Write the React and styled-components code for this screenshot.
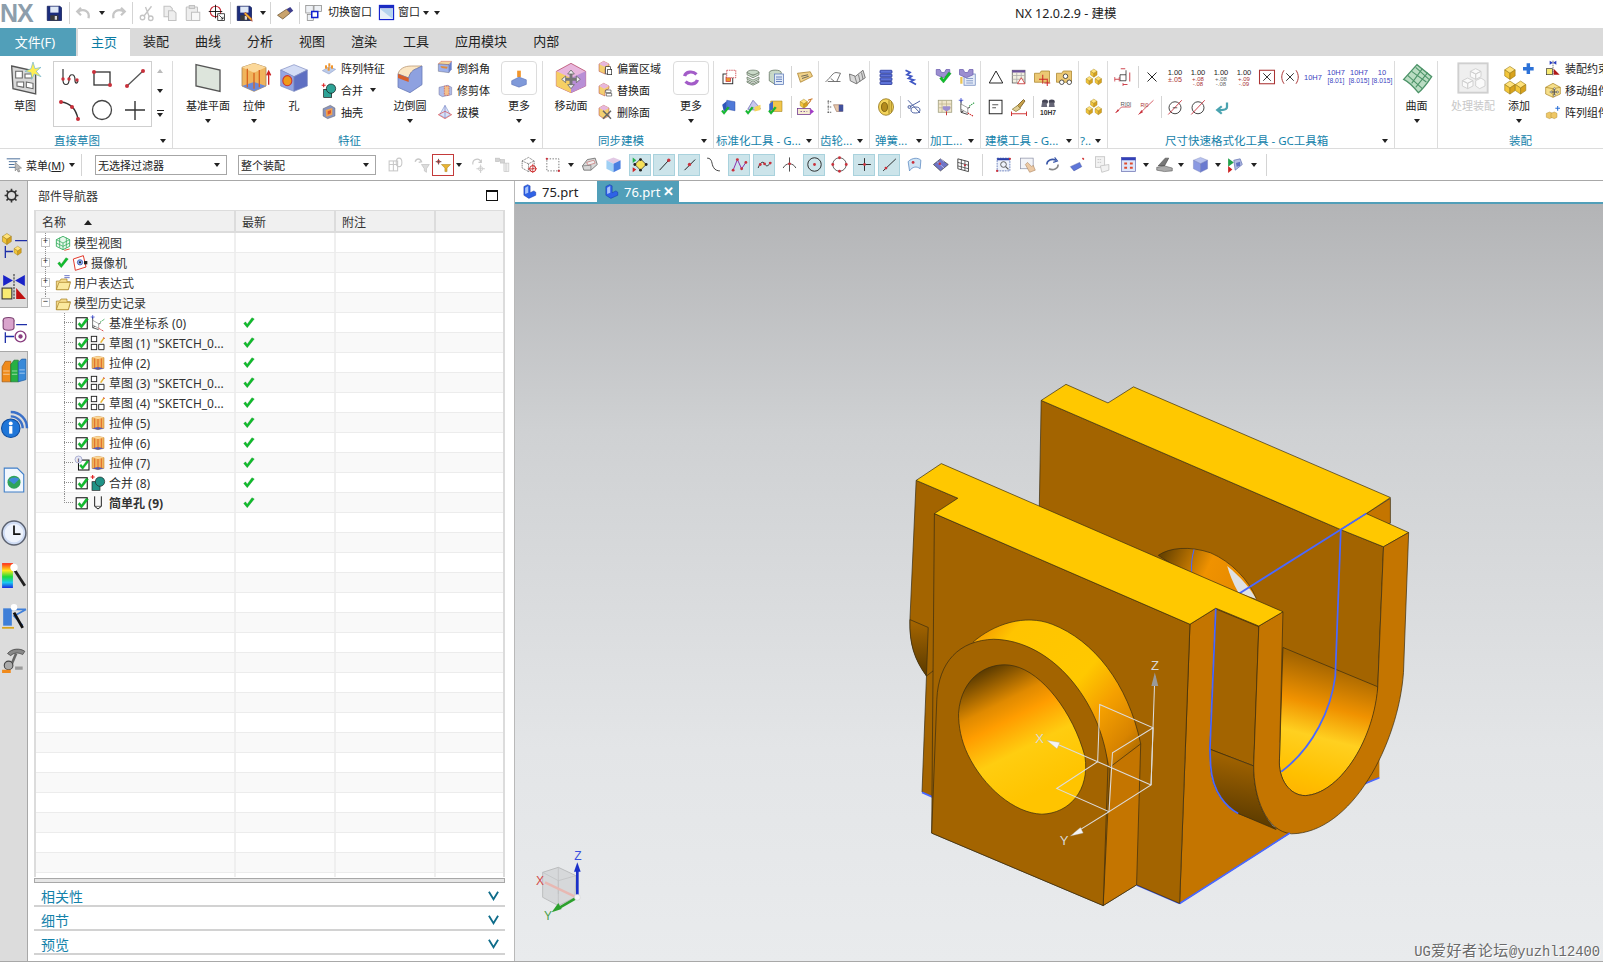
import React from 'react'
import styled, { createGlobalStyle } from 'styled-components'

const GlobalStyle = createGlobalStyle`
  html, body { margin: 0; padding: 0; background: #fff; }
  body {
    width: 1603px; height: 965px; overflow: hidden;
    font-family: "Noto Sans", "Noto Sans CJK SC", sans-serif;
    font-size: 11px; color: #333;
  }
`

const Shell = styled.div`
  width: 1603px;
  height: 965px;
  display: flex;
  flex-direction: column;
  overflow: hidden;
`

/* ---------- title bar ---------- */
const TitleBar = styled.div`
  height: 28px;
  display: flex;
  align-items: center;
  box-sizing: border-box;
  padding-bottom: 3px;
  background: #fff;
  font-size: 12px;
  white-space: nowrap;
`
const Logo = styled.div`
  width: 33px;
  font: bold 25px/28px "Liberation Sans", sans-serif;
  letter-spacing: -1px;
  color: #8d9eac;
`
const Slot = styled.div`
  flex: none;
  width: ${p => p.$w}px;
  margin-left: ${p => p.$ml}px;
  height: ${p => p.$h || 22}px;
  display: flex;
  align-items: center;
  justify-content: center;
  box-sizing: border-box;
  ${p => p.$on && 'background: #cce4ea; border: 1px solid #a9d2dd;'}
  ${p => p.$box && 'border: 1px solid #c43a3a;'}
`
const Bar = styled.div`
  flex: none;
  width: 1px;
  margin-left: ${p => p.$ml}px;
  height: ${p => p.$h || 22}px;
  background: #d4d4d4;
`
const Down = styled.div`
  flex: none;
  margin-left: ${p => p.$ml || 0}px;
  width: 0;
  height: 0;
  border-left: 3.5px solid transparent;
  border-right: 3.5px solid transparent;
  border-top: 4px solid #222;
`
const BarText = styled.span`
  flex: none;
  margin-left: ${p => p.$ml}px;
  font-size: ${p => p.$fs || 11}px;
  color: #222;
`
const QuickText = styled(BarText)`
  margin-bottom: 3px;
`
const WinTitle = styled.span`
  margin-left: 575px;
  font-size: 12.5px;
  color: #222;
`

/* ---------- tabs ---------- */
const TabBar = styled.div`
  height: 28px;
  display: flex;
  background: #dadada;
`
const FileTab = styled.div`
  width: 76px;
  margin-right: 2px;
  box-sizing: border-box;
  padding-right: 6px;
  background: #519fb9;
  color: #fff;
  font-size: 13px;
  line-height: 28px;
  text-align: center;
`
const MenuTab = styled.div`
  padding: 0 13px;
  font-size: 13px;
  line-height: 27px;
  color: ${p => (p.$on ? '#0b7ca3' : '#222')};
  box-sizing: border-box;
  ${p => p.$on && 'background: #fff; border-top: 1px solid #b9b9b9;'}
`

/* ---------- ribbon ---------- */
const Ribbon = styled.div`
  height: 93px;
  display: flex;
  padding-top: 5px;
  box-sizing: border-box;
  border-bottom: 1px solid #dcdcdc;
  overflow: hidden;
  flex: none;
`
const Group = styled.div`
  flex: none;
  width: ${p => p.$w}px;
  height: 87px;
  box-sizing: border-box;
  border-right: ${p => (p.$last ? 'none' : '1px solid #dcdcdc')};
  display: flex;
  flex-direction: column;
`
const GroupBody = styled.div`
  height: 72px;
  display: flex;
  padding-left: ${p => p.$pl || 0}px;
`
const GroupFoot = styled.div`
  height: 15px;
  display: flex;
  align-items: center;
  padding: 0 6px 0 ${p => p.$pl || 0}px;
  font-size: 11.5px;
  line-height: 15px;
  color: #1482aa;
  white-space: nowrap;
`
const FootCaret = styled(Down)`
  margin-left: auto;
`
const BigTool = styled.div`
  flex: none;
  width: ${p => p.$w}px;
  margin-left: ${p => p.$ml || 0}px;
  display: flex;
  flex-direction: column;
  align-items: center;
  font-size: 11px;
  line-height: 14px;
  white-space: nowrap;
  color: ${p => (p.$off ? '#c8c8c8' : '#222')};
`
const BigIcon = styled.div`
  width: 36px;
  height: 33px;
  margin: 0 0 5px;
  display: flex;
  align-items: center;
  justify-content: center;
`
const MoreIcon = styled.div`
  width: 36px;
  height: 34px;
  margin-bottom: 4px;
  box-sizing: border-box;
  border: 1px solid #dcdcdc;
  border-radius: 4px;
  display: flex;
  align-items: center;
  justify-content: center;
`
const ToolCaret = styled(Down)`
  margin-top: 6px;
`
const Gallery = styled.div`
  flex: none;
  width: 99px;
  height: 66px;
  margin-left: 6px;
  box-sizing: border-box;
  border: 1px solid #cfcfcf;
  display: grid;
  grid-template-columns: repeat(3, 1fr);
  align-items: center;
  justify-items: center;
`
const Scroller = styled.div`
  flex: none;
  width: 16px;
  height: 66px;
  display: flex;
  flex-direction: column;
  align-items: center;
  justify-content: space-around;
  padding: 0 0 2px;
  box-sizing: border-box;
`
const ScrollUp = styled.div`
  width: 0;
  height: 0;
  border-left: 3.5px solid transparent;
  border-right: 3.5px solid transparent;
  border-bottom: 4px solid #bbb;
`
const ScrollMore = styled.div`
  width: 7px;
  border-top: 1px solid #222;
  padding-top: 2px;
  display: flex;
  justify-content: center;
`
const SmallCol = styled.div`
  flex: none;
  width: ${p => p.$w}px;
  margin: -4px 0 0 ${p => p.$ml || 0}px;
  display: flex;
  flex-direction: column;
`
const SmallRow = styled.div`
  height: 22px;
  display: flex;
  align-items: center;
  gap: 4px;
  font-size: 11px;
  color: #222;
  white-space: nowrap;
`
const IconRows = styled.div`
  display: flex;
  flex-direction: column;
  padding-top: 4px;
  gap: 6px;
`
const IconRow = styled.div`
  height: 24px;
  display: flex;
  align-items: center;
`

/* ---------- toolbar ---------- */
const ToolBar = styled.div`
  height: 31px;
  flex: none;
  display: flex;
  align-items: center;
  background: #fff;
  white-space: nowrap;
`
const ToolStart = styled.div`
  flex: none;
  width: 376px;
  display: flex;
  align-items: center;
`
const Select = styled.div`
  flex: none;
  width: ${p => p.$w}px;
  height: 20px;
  box-sizing: border-box;
  border: 1px solid #a6a6a6;
  border-width: 1px 1.5px;
  display: flex;
  align-items: center;
  justify-content: space-between;
  padding: 0 6px 0 2px;
  font-size: 11px;
  color: #222;
`
const Selects = styled.div`
  margin-left: auto;
  display: flex;
  gap: 11px;
`

/* ---------- main ---------- */
const Main = styled.div`
  flex: 1;
  display: flex;
  border-top: 1px solid #a8a8a8;
  border-bottom: 1px solid #a8a8a8;
  margin-bottom: 3px;
  min-height: 0;
`
const Rail = styled.div`
  flex: none;
  width: 28px;
  box-sizing: border-box;
  background: #dcdcdc;
  border-right: 1px solid #a8a8a8;
  display: flex;
  flex-direction: column;
`
const RailItem = styled.div`
  flex: none;
  margin-top: ${p => p.$mt}px;
  height: ${p => p.$h || 30}px;
  display: flex;
  align-items: center;
  justify-content: center;
  box-sizing: border-box;
  ${p => p.$small && 'padding-right: 5px;'}
  ${p => p.$on && `
    width: 28px;
    background: #fff;
    border-top: 1px solid #a8a8a8;
    border-bottom: 1px solid #a8a8a8;
  `}
`
const Nav = styled.div`
  flex: none;
  width: 487px;
  box-sizing: border-box;
  border-right: 1px solid #b9b9b9;
  display: flex;
  flex-direction: column;
  padding: 0 9px 6px 6px;
`
const NavHead = styled.div`
  height: 29px;
  flex: none;
  display: flex;
  align-items: center;
  justify-content: space-between;
  padding: 0 7px 0 4px;
  font-size: 12px;
  color: #333;
`
const RestoreBox = styled.div`
  width: 12px;
  height: 11px;
  box-sizing: border-box;
  border: 1px solid #111;
  border-top-width: 2px;
`
const Table = styled.div`
  flex: 1;
  min-height: 0;
  border: solid #dcdcdc;
  border-width: 1px 2px 0 2px;
  overflow: hidden;
  display: flex;
  flex-direction: column;
`
const HeadRow = styled.div`
  height: 20px;
  flex: none;
  display: flex;
  background: #f0f0f0;
  border-bottom: 2px solid #dcdcdc;
`
const HeadCell = styled.div`
  width: ${p => p.$w};
  flex: ${p => (p.$w ? 'none' : 1)};
  box-sizing: border-box;
  border-right: 2px solid #dcdcdc;
  padding: 2px 0 0 6px;
  display: flex;
  align-items: center;
  gap: 18px;
  font-size: 12px;
  color: #333;
  &:last-child { border-right: none; }
`
const SortUp = styled.div`
  width: 0;
  height: 0;
  border-left: 4.5px solid transparent;
  border-right: 4.5px solid transparent;
  border-bottom: 5px solid #222;
`
const Row = styled.div`
  height: 20px;
  flex: none;
  display: flex;
  box-sizing: border-box;
  border-bottom: 1px solid #ececec;
  background: ${p => (p.$odd ? '#f9f9f9' : '#fff')};
  position: relative;
  &::before {
    content: ${p => (p.$guide ? "''" : 'none')};
    position: absolute;
    left: ${p => p.$guide}px;
    top: 0;
    height: ${p => (p.$end ? '10px' : '100%')};
    border-left: 1px dotted #8f8f8f;
  }
`
const NameCell = styled.div`
  width: 200px;
  flex: none;
  box-sizing: border-box;
  border-right: 2px solid #efefef;
  display: flex;
  align-items: center;
  padding-left: ${p => p.$pl}px;
  font-size: 12px;
  font-weight: ${p => (p.$bold ? 700 : 400)};
  color: #333;
  white-space: nowrap;
  overflow: hidden;
`
const Cell = styled.div`
  width: ${p => p.$w};
  flex: ${p => (p.$w ? 'none' : 1)};
  box-sizing: border-box;
  border-right: 2px solid #efefef;
  padding-left: 6px;
  display: flex;
  align-items: center;
  &:last-child { border-right: none; }
`
const Expander = styled.div`
  flex: none;
  width: 9px;
  height: 9px;
  box-sizing: border-box;
  border: 1px solid #c6c6c6;
  background: #fff;
  font: 9px/7px "Liberation Mono", monospace;
  text-align: center;
  color: #111;
  margin-right: 4px;
  position: relative;
  z-index: 1;
`
const Tick = styled.div`
  flex: none;
  width: 9px;
  border-top: 1px dotted #8f8f8f;
  margin-right: 2px;
`
const Gap = styled.span`
  flex: none;
  margin-left: ${p => p.$ml}px;
`
const Splitter = styled.div`
  height: 5px;
  flex: none;
  box-sizing: border-box;
  border: 1px solid #a8a8a8;
  background: #e6e6e6;
  margin: 1px 0 0 0;
`
const Section = styled.div`
  height: 24px;
  flex: none;
  box-sizing: border-box;
  border-bottom: 2px solid #d2d2d2;
  display: flex;
  align-items: center;
  justify-content: space-between;
  padding: 3px 6px 0 7px;
  font-size: 14px;
  color: #1482aa;
`

/* ---------- graphics window ---------- */
const Work = styled.div`
  flex: 1;
  min-width: 0;
  display: flex;
  flex-direction: column;
`
const DocTabs = styled.div`
  height: 21px;
  flex: none;
  display: flex;
  padding-left: 5px;
  border-bottom: 2px solid #519fb9;
`
const DocTab = styled.div`
  width: ${p => p.$w}px;
  box-sizing: border-box;
  display: flex;
  align-items: center;
  gap: 5px;
  padding-left: ${p => (p.$on ? 7 : 2)}px;
  font-size: 13px;
  color: ${p => (p.$on ? '#fff' : '#222')};
  background: ${p => (p.$on ? '#519fb9' : 'transparent')};
`
const CloseX = styled.span`
  font: bold 13px/14px "Liberation Sans", sans-serif;
  margin-left: -2px;
`
const Viewport = styled.div`
  flex: 1;
  position: relative;
  overflow: hidden;
  background: linear-gradient(180deg, #b3b4b6 0%, #cfd1d3 30%, #e3e5e7 72%, #e9ebed 100%);
`
const Canvas = styled.svg`
  position: absolute;
  left: 0;
  top: 0;
  width: 1088px;
  height: 758px;
`
const Watermark = styled.div`
  position: absolute;
  right: 3px;
  bottom: 0;
  font: 13.8px/16px "Liberation Mono", monospace;
  color: #6a6a6a;
  text-shadow: 1px 1px 0 #fff;
  white-space: nowrap;
`
const WatermarkCjk = styled.span`
  font-family: "Noto Sans CJK SC", sans-serif;
  font-size: 15px;
  letter-spacing: .6px;
`
const Svg = styled.svg`
  display: block;
  flex: none;
  width: ${p => p.$s}px;
  height: ${p => p.$s}px;
  overflow: visible;
`

/* ---------- icon drawings ---------- */
const red = '#c9313c'
const Dot = ({ x, y, r = 2 }) => <circle cx={x} cy={y} r={r} fill={red} />
const Chk = ({ x = 0, y = 0, k = 1 }) => (
  <path transform={`translate(${x} ${y}) scale(${k})`} d="M3 13 L9 20 L21 5 L17 3 L9 14 L6 10 Z" fill="#10bd2c" stroke="#0a8a20" strokeWidth=".6" />
)
const Cube = ({ x = 0, y = 0, k = 1, a = '#ffe27a', b = '#f3c63a', c = '#d8a21c' }) => (
  <g transform={`translate(${x} ${y}) scale(${k})`} stroke="#9a7a18" strokeWidth=".7">
    <path d="M2 6 L8 2 L14 6 L8 10 Z" fill={a} />
    <path d="M2 6 L8 10 V17 L2 13 Z" fill={b} />
    <path d="M14 6 L8 10 V17 L14 13 Z" fill={c} />
  </g>
)
const Txt = ({ x = 12, y, s = 7, f = '#222', w = 400, children }) => (
  <text x={x} y={y} fontSize={s} fill={f} fontWeight={w} textAnchor="middle" fontFamily="Liberation Sans, sans-serif">{children}</text>
)
const Tol = ({ a, b, f = '#a33' }) => (
  <>
    <Txt y={9} s={10} f="#222">1.00</Txt>
    <Txt y={b ? 17 : 19} s={b ? 8 : 9.5} f={f}>{a}</Txt>
    {b && <Txt y={24} s={8} f={f}>{b}</Txt>}
  </>
)
const Fit = ({ a, b }) => (
  <>
    <Txt y={9} s={10} f="#3a3fc0">{a}</Txt>
    <Txt y={20} s={9} f="#3a3fc0">{b}</Txt>
  </>
)
const Floppy = () => (
  <>
    <path d="M3 3 H20 L22 5 V22 H3 Z" fill="#1c2d7c" stroke="#0d1a55" />
    <rect x="7" y="3.5" width="11" height="8" fill="#dfe8f6" />
    <rect x="7" y="15" width="11" height="7" fill="#3a3a3a" />
    <rect x="13" y="16" width="3" height="5" fill="#d8d8d8" />
  </>
)

const ICONS = {
  save: <Floppy />,
  saveas: (
    <>
      <Floppy />
      <path d="M12 13 L20 21 L23 23 L22 19 L14 11 Z" fill="#f2b72c" stroke="#a33" strokeWidth=".8" />
    </>
  ),
  undo: <path d="M8 5 L3 10 L8 15 M4 10 C12 6 20 9 18 19" fill="none" stroke="#c6c6c6" strokeWidth="3" />,
  redo: <path d="M16 5 L21 10 L16 15 M20 10 C12 6 4 9 6 19" fill="none" stroke="#c6c6c6" strokeWidth="3" />,
  cut: (
    <g fill="none" stroke="#c4c4c4" strokeWidth="1.8">
      <circle cx="6" cy="18" r="3" />
      <circle cx="17" cy="19" r="3" />
      <path d="M8 16 L18 3 M15 17 L10 4" />
    </g>
  ),
  copy: (
    <g fill="#eee" stroke="#c2c2c2" strokeWidth="1.4">
      <path d="M4 3 H12 L15 6 V17 H4 Z" />
      <path d="M10 9 H17 L20 12 V22 H10 Z" />
    </g>
  ),
  paste: (
    <g fill="#eee" stroke="#c2c2c2" strokeWidth="1.4">
      <rect x="3" y="4" width="15" height="18" rx="1" />
      <rect x="7" y="2" width="7" height="4" fill="#ddd" />
      <rect x="10" y="11" width="11" height="11" fill="#f8f8f8" />
    </g>
  ),
  target: (
    <>
      <circle cx="10" cy="10" r="7" fill="none" stroke={red} strokeWidth="1.6" />
      <path d="M10 1 V19 M1 10 H19" stroke="#111" strokeWidth="1.2" />
      <rect x="13" y="13" width="9" height="9" fill="#fff" stroke="#111" />
      <path d="M15 15 L20 20 M20 17 V20 H17" stroke="#111" fill="none" />
    </>
  ),
  eraser: (
    <>
      <path d="M2 15 L14 7 L19 12 L9 20 Z" fill="#c9a36c" stroke="#6c5430" />
      <path d="M14 7 L19 4 L23 9 L19 12 Z" fill="#3d3d8c" />
    </>
  ),
  switchwin: (
    <>
      <rect x="1" y="2" width="10" height="10" fill="#eef1f5" stroke="#888" />
      <rect x="12" y="2" width="10" height="8" fill="#eef1f5" stroke="#888" />
      <rect x="3" y="14" width="8" height="8" fill="#eef1f5" stroke="#888" />
      <rect x="9" y="10" width="8" height="8" fill="#fff" stroke="#1220d0" strokeWidth="2" />
    </>
  ),
  win: (
    <>
      <rect x="2" y="2" width="20" height="20" fill="#e8f0f8" stroke="#1220d0" strokeWidth="1.6" />
      <rect x="2" y="2" width="20" height="4" fill="#1c2dc0" />
      <path d="M3 7 H21 V21 Z" fill="#b5d3ee" />
    </>
  ),
  sketch: (
    <>
      <path d="M2 3 L20 7 V24 L3 20 Z" fill="#d8d8d8" stroke="#555" />
      <path d="M5 7 H10 V12 H5 Z M12 9 H17 V12 H12 Z M6 15 L11 15 V19 L6 18 Z M13 15 L18 16 V20 L13 19 Z" fill="#fff" stroke="#666" strokeWidth=".8" />
      <path d="M18 0 L19.5 5 L24 4 L20.5 7 L24 11 L19 9 L17 13 L16.5 8 L12 7 L16.5 5 Z" fill="#ffee55" stroke="#6cb4d4" strokeWidth=".5" />
    </>
  ),
  scurve: (
    <>
      <path d="M5 3 V14 C5 20 11 20 11 14 C11 7 17 7 17 14 C17 18 19 18 20 15" fill="none" stroke="#333" strokeWidth="1.2" />
      <Dot x={5} y={13} r={1.7} /><Dot x={11} y={13} r={1.7} /><Dot x={19} y={14} r={1.7} />
    </>
  ),
  srect: (
    <g>
      <rect x="4" y="6" width="16" height="13" fill="none" stroke="#333" strokeWidth="1.3" />
      <Dot x={4} y={6} /><Dot x={20} y={19} />
    </g>
  ),
  sline: (
    <g>
      <path d="M4 20 L20 5" stroke="#555" strokeWidth="1.3" />
      <Dot x={4} y={20} /><Dot x={20} y={5} />
    </g>
  ),
  sarc: (
    <g>
      <path d="M3 4 C13 5 18 11 20 21" fill="none" stroke="#333" strokeWidth="1.4" />
      <Dot x={3} y={4} /><Dot x={14} y={9} /><Dot x={20} y={21} />
    </g>
  ),
  scircle: <circle cx="12" cy="12" r="9.5" fill="none" stroke="#444" strokeWidth="1.3" />,
  splus: <path d="M12 3 V22 M2 12 H22" stroke="#333" strokeWidth="1.4" />,
  plane: <path d="M3 2 L21 6 V22 L3 18 Z" fill="#dde5dc" stroke="#555" />,
  extrude: (
    <>
      <path d="M3 4 L12 1 L21 4 V18 L12 22 L3 18 Z" fill="#f0b45c" stroke="#a85" strokeWidth=".6" />
      <path d="M3 4 L12 8 L21 4 L12 1 Z" fill="#fbd89a" />
      <path d="M3 18 L12 22 L21 18 L12 15 Z" fill="#6b89d8" />
      <path d="M7 5 V19 M12 8 V20 M16 6 V19" stroke="#d8641e" strokeWidth="1" />
      <path d="M23 8 V17 M21.5 10 L23 7 L24.5 10" stroke="#c22" fill="none" strokeWidth="1" />
    </>
  ),
  hole: (
    <>
      <path d="M12 2 L22 6 L12 11 L2 6 Z" fill="#d3dcf5" stroke="#7a88c0" strokeWidth=".5" />
      <path d="M2 6 L12 11 V22 L2 18 Z" fill="#94a5e2" stroke="#7a88c0" strokeWidth=".5" />
      <path d="M22 6 L12 11 V22 L22 18 Z" fill="#5e6fc2" stroke="#7a88c0" strokeWidth=".5" />
      <ellipse cx="7" cy="14" rx="3.4" ry="3.8" fill="#ef9a1a" stroke="#c33" strokeWidth=".8" />
    </>
  ),
  blend: (
    <>
      <path d="M3 9 C4 5 8 3 13 3 H21 L17 5 C14 6 12 8 11 12 L3 9 Z" fill="#fbe6c4" stroke="#b97" strokeWidth=".6" />
      <path d="M3 9 L11 12 C12 8 14 6 17 5 L21 3 V17 L12 23 L3 19 Z" fill="#8ea1e0" stroke="#6a7bb8" strokeWidth=".6" />
      <path d="M3 9 L11 12 V15 L3 12 Z" fill="#d95f2a" />
    </>
  ),
  more1: (
    <>
      <rect x="10" y="4" width="4" height="7" fill="#f1952b" />
      <path d="M4 15 L12 11 L20 14 V19 L12 22 L4 19 Z" fill="#7f99d9" stroke="#5a6fb5" strokeWidth=".6" />
    </>
  ),
  more2: (
    <g fill="none" stroke="#a35cc8" strokeWidth="3.4">
      <path d="M5 10 C6 5 14 4 18 8" />
      <path d="M19 14 C18 19 10 20 6 16" />
    </g>
  ),
  movface: (
    <>
      <path d="M12 1 L23 7 V18 L12 23 L1 18 V7 Z" fill="#e8b6dd" stroke="#a35" strokeWidth=".5" />
      <path d="M1 7 L12 12 V23 L1 18 Z" fill="#f6cf63" />
      <path d="M12 12 L23 7 V18 L12 23 Z" fill="#b88fd6" />
      <path d="M12 7 V19 M6 13 H18" stroke="#777" strokeWidth="2.2" />
      <path d="M12 6 L9.5 9 H14.5 Z M12 20 L9.5 17 H14.5 Z M5 13 L8 10.5 V15.5 Z M19 13 L16 10.5 V15.5 Z" fill="#eee" stroke="#666" strokeWidth=".6" />
    </>
  ),
  surface: (
    <>
      <path d="M2 13 L12 2 L23 11 C19 17 17 20 13 23 C9 18 6 15 2 13 Z" fill="#b9dcc2" stroke="#4c9368" />
      <path d="M5 10 L16 20 M8 7 L19 15 M11 4 L21 13 M8 16 L16 5 M11 19 L20 8" stroke="#4c9368" strokeWidth=".8" />
    </>
  ),
  proc: (
    <>
      <rect x="1" y="1" width="22" height="22" fill="#efefef" stroke="#cfcfcf" strokeWidth="1.4" />
      <path d="M10 7 L14 5 L18 7 L14 9 Z M10 7 V11 L14 13 V9 Z M18 7 V11 L14 13 V9 Z M4 14 L8 12 L12 14 L8 16 Z M4 14 V18 L8 20 V16 Z M12 14 V18 L8 20 V16 Z M14 14 L18 12 L21 14 V18 L17 20 L14 18 Z" fill="#fafafa" stroke="#d0d0d0" strokeWidth=".7" />
    </>
  ),
  add: (
    <>
      <Cube x={0} y={2} k={.65} /><Cube x={0} y={13} k={.65} /><Cube x={8} y={13} k={.65} />
      <path d="M19 1 V9 M15 5 H23" stroke="#2d72d8" strokeWidth="2.6" />
    </>
  ),
  pattern: (
    <>
      <path d="M2 16 L12 10 L22 14 L12 21 Z" fill="#bccbe9" stroke="#6d7fb6" strokeWidth=".6" />
      <rect x="6" y="8" width="3" height="5" fill="#f1952b" /><rect x="11" y="5" width="3" height="5" fill="#f1952b" />
      <rect x="15" y="8" width="3" height="5" fill="#f1952b" /><rect x="10" y="11" width="3" height="5" fill="#f1952b" />
    </>
  ),
  unite: (
    <>
      <path d="M1 5 H7 M4 2 V8" stroke="#d22" strokeWidth="1.6" />
      <rect x="4" y="11" width="12" height="12" fill="#2ea396" stroke="#111" />
      <circle cx="15" cy="10" r="7" fill="#2ea396" stroke="#111" />
    </>
  ),
  shell: (
    <>
      <path d="M3 7 L14 2 L21 6 V18 L10 22 L3 18 Z" fill="#8a94bd" stroke="#555" strokeWidth=".6" />
      <path d="M7 9 L17 6 V16 L8 19 Z" fill="#f2a14e" />
      <path d="M10 11 L15 9 V14 L10 16 Z" fill="#d9542a" />
    </>
  ),
  chamfer: (
    <>
      <path d="M2 6 L6 2 H22 L18 7 Z" fill="#f4d69b" stroke="#c55" strokeWidth=".7" />
      <path d="M2 6 L18 7 V19 L2 17 Z" fill="#9db0ea" stroke="#556" strokeWidth=".6" />
      <path d="M18 7 L22 2 V14 L18 19 Z" fill="#6a7fc9" />
      <path d="M5 9 L16 10 L15 13 L7 12 Z" fill="#e08a3a" />
    </>
  ),
  trim: (
    <>
      <path d="M3 8 L16 5 L22 8 V19 L8 22 L3 19 Z" fill="#b0bce8" stroke="#6f6f9a" strokeWidth=".7" />
      <rect x="11" y="6" width="7" height="14" fill="#f3c08c" stroke="#c33" strokeDasharray="1.5 1" strokeWidth=".8" />
    </>
  ),
  draft: (
    <>
      <path d="M4 16 L12 2 L20 16 L12 21 Z" fill="#d8e2f8" stroke="#6f86c8" strokeWidth=".8" />
      <path d="M2 16 L12 11 L22 16 L12 22 Z" fill="none" stroke="#d44" strokeWidth="1" />
      <path d="M12 2 V21" stroke="#55a" strokeWidth=".7" />
    </>
  ),
  offset: (
    <>
      <path d="M3 6 L10 2 L18 6 L18 10 L12 13 V21 L3 17 Z" fill="#f3cf70" stroke="#a34" strokeWidth=".7" />
      <path d="M3 6 L10 2 L18 6 L11 10 Z" fill="#e7b6dd" />
      <rect x="13" y="10" width="7" height="11" fill="#fff" stroke="#222" />
      <rect x="16" y="14" width="6" height="8" fill="#fff" stroke="#222" />
    </>
  ),
  replace: (
    <>
      <path d="M3 6 L10 2 L18 6 L18 10 L12 13 V21 L3 17 Z" fill="#f3cf70" stroke="#a34" strokeWidth=".7" />
      <path d="M3 6 L10 2 L18 6 L11 10 Z" fill="#e7b6dd" />
      <path d="M13 12 H21 V16 H13 Z M14 17 H22 V21 H14 Z" fill="#fff" stroke="#333" strokeWidth=".9" />
    </>
  ),
  del: (
    <>
      <path d="M3 6 L10 2 L18 6 L18 18 L10 22 L3 17 Z" fill="#f3cf70" stroke="#a34" strokeWidth=".7" />
      <path d="M3 6 L10 2 L18 6 L11 10 Z" fill="#e7b6dd" />
      <path d="M9 10 L21 22 M21 10 L9 22" stroke="#666" strokeWidth="2.2" />
    </>
  ),
  csys: (
    <>
      <path d="M4 3 V19 L16 12 M4 19 L13 22" fill="none" stroke="#333" strokeWidth="1.2" />
      <path d="M4 8 L13 13 V20 L4 15 Z" fill="#fff" stroke="#666" strokeWidth=".8" />
      <path d="M1 3 H7 M4 0 V6" stroke="#2233cc" strokeWidth="1" />
      <path d="M15 11 L22 6" stroke="#2a9d43" strokeWidth="1.4" strokeDasharray="2 1" />
      <path d="M13 20 L20 24" stroke="#c22" strokeWidth="1.4" strokeDasharray="2 1" />
    </>
  ),
  stdA: (
    <>
      <rect x="4" y="8" width="13" height="13" fill="none" stroke="#222" strokeWidth="1.2" />
      <rect x="8" y="12" width="6" height="6" fill="#ec9a2c" stroke={red} />
      <rect x="9" y="3" width="12" height="10" fill="#fff" stroke={red} strokeDasharray="2 1" />
    </>
  ),
  stack: (
    <g fill="#c9d9c8" stroke="#5f6f5c" strokeWidth=".9">
      <ellipse cx="12" cy="6" rx="8" ry="3.2" /><path d="M4 6 L12 10 L20 6 V9 L12 13 L4 9 Z" />
      <path d="M4 12 L12 16 L20 12 V15 L12 19 L4 15 Z" /><path d="M4 17 L12 21 L20 17 V19 L12 23 L4 19 Z" />
    </g>
  ),
  stacklist: (
    <>
      <ellipse cx="11" cy="6" rx="8" ry="3.2" fill="#c9d9c8" stroke="#5f6f5c" />
      <path d="M3 7 V17 L11 22 L19 17 V7" fill="#c9d9c8" stroke="#5f6f5c" />
      <rect x="10" y="8" width="12" height="14" fill="#e3ecf8" stroke="#5a78b8" />
      <path d="M12 12 H20 M12 15 H20 M12 18 H20" stroke="#3c5ca8" />
    </>
  ),
  tag: (
    <>
      <path d="M2 7 L19 5 L22 11 L6 19 Z" fill="#f0d28a" stroke="#a87c24" />
      <path d="M7 11 L16 9 M8 14 L17 11" stroke="#444" />
    </>
  ),
  bluecheck: (
    <>
      <path d="M9 3 L20 5 V17 L9 15 Z" fill="#4f79d8" stroke="#2b4aa0" strokeWidth=".6" />
      <path d="M3 9 L9 4 V15 L5 18 Z" fill="#2e56b8" />
      <Chk x={0} y={10} k={.6} />
    </>
  ),
  wingcheck: (
    <>
      <path d="M5 15 L12 3 L22 14 L14 16 Z" fill="#c8c7ef" stroke="#6e6db5" />
      <path d="M14 12 L22 9 V16 L14 18 Z" fill="#f6d55c" />
      <Chk x={0} y={10} k={.6} />
    </>
  ),
  cubecheck: (
    <>
      <path d="M5 4 H20 V18 H5 Z" fill="#f2c64b" stroke="#9a7a18" strokeWidth=".7" />
      <path d="M3 8 L8 4 V15 L3 18 Z" fill="#3e68c8" />
      <Chk x={0} y={10} k={.6} />
    </>
  ),
  boxpurple: (
    <>
      <Cube x={4} y={0} k={.8} />
      <rect x="2" y="14" width="17" height="8" fill="#f6ecd0" stroke="#6a2f8c" />
      <path d="M6 18 H15" stroke="#6a2f8c" strokeDasharray="2 2" />
      <path d="M19 14 L24 18 L19 22 Z" fill="#a33ac8" />
      <path d="M16 3 L22 1 M20 3 L15 9" stroke="#c9741e" strokeWidth="1.5" />
    </>
  ),
  pen1: (
    <g fill="none" stroke="#666" strokeWidth="1.2">
      <path d="M2 18 C6 17 11 6 16 6 L22 7 L17 18 H22" />
      <path d="M5 18 H19 M9 14 L14 18" />
    </g>
  ),
  pen2: (
    <>
      <path d="M2 8 L10 11 L20 3 L23 13 L11 21 L3 17 Z" fill="#d9d9d9" stroke="#555" />
      <path d="M9 11 L12 21 M14 9 L16 18 M18 6 L20 15" stroke="#666" />
    </>
  ),
  hand: (
    <>
      <path d="M2 5 H8 M2 12 H8 M2 19 H8" stroke="#333" strokeDasharray="2 1" />
      <path d="M3 3 V21" stroke="#333" strokeDasharray="1 1" />
      <path d="M10 9 H22 V18 H14 Z" fill="#e7c6a8" stroke="#a87" />
      <rect x="17" y="9" width="6" height="9" fill="#41509c" />
    </>
  ),
  coil: (
    <g fill="#5e73d8" stroke="#1f2f90" strokeWidth="1">
      <rect x="4" y="3" width="16" height="4" rx="1" /><rect x="4" y="8" width="16" height="4" rx="1" />
      <rect x="4" y="13" width="16" height="4" rx="1" /><rect x="4" y="18" width="16" height="4" rx="1" />
    </g>
  ),
  spring: <path d="M6 3 L12 6 L8 9 L14 11 L10 14 L17 16 L13 18 L20 22" fill="none" stroke="#4057c4" strokeWidth="2.4" />,
  washer: (
    <>
      <ellipse cx="12" cy="12" rx="10" ry="11" fill="#f3d35a" stroke="#8a6b10" />
      <ellipse cx="10" cy="12" rx="4" ry="6" fill="#b38a1c" stroke="#6b5208" />
      <path d="M16 3 V21 M19 5 V19" stroke="#8a6b10" />
    </>
  ),
  shears: (
    <g fill="none" stroke="#4a5fa0" strokeWidth="1.3">
      <path d="M4 3 L20 20 M6 12 L20 4" />
      <ellipse cx="14" cy="16" rx="6" ry="4" />
      <circle cx="6" cy="12" r="2" />
    </g>
  ),
  pcheck: (
    <>
      <path d="M3 2 H8 L10 6 H14 L16 2 H21 V9 L12 13 L3 9 Z" fill="#9b8ed0" stroke="#6c5fb0" />
      <Chk x={5} y={3} k={.85} />
    </>
  ),
  pdoc: (
    <>
      <rect x="8" y="8" width="15" height="15" fill="#e4ebf8" stroke="#6c86bc" />
      <path d="M2 2 H7 L9 6 H13 L15 2 H20 V9 L11 13 L2 9 Z" fill="#9b8ed0" stroke="#6c5fb0" />
      <path d="M3 12 V21 H6 V12 Z" fill="#eac353" />
      <path d="M11 14 H20 M11 17 H20 M11 20 H20" stroke="#6c86bc" />
    </>
  ),
  gridp: (
    <>
      <rect x="3" y="3" width="18" height="16" fill="#f1e7cc" stroke="#9a9a7a" />
      <path d="M3 8 H21 M3 13 H21 M8 3 V19 M14 3 V19" stroke="#bdb38c" />
      <path d="M9 11 H19 V15 L14 18 L9 15 Z" fill="#9b8ed0" />
      <path d="M14 18 V23" stroke="#c33" strokeWidth="1.4" />
    </>
  ),
  tri: <path d="M12 4 L21 20 H3 Z" fill="none" stroke="#222" strokeWidth="1.3" />,
  tbl: (
    <>
      <rect x="3" y="3" width="17" height="17" fill="#f2efe0" stroke="#555" />
      <rect x="3" y="3" width="17" height="3" fill="#6a4f9c" />
      <path d="M3 10 H20 M3 15 H20 M9 6 V20 M15 6 V20" stroke="#aaa" />
      <path d="M15 13 L20 21 H10 Z" fill="#fff" stroke="#c22" />
    </>
  ),
  foldplus: (
    <>
      <path d="M2 7 H9 L11 4 H22 V19 H2 Z" fill="#ecc873" stroke="#a9842c" />
      <path d="M13 9 V21 M8 15 H20 M19 16 V24 M15 20 H23" stroke="#c22" strokeWidth="1.3" />
    </>
  ),
  foldnet: (
    <>
      <path d="M2 7 H9 L11 4 H22 V19 H2 Z" fill="#ecc873" stroke="#a9842c" />
      <circle cx="14" cy="11" r="3" fill="#fff" stroke="#222" />
      <circle cx="9" cy="19" r="3" fill="#fff" stroke="#222" />
      <circle cx="19" cy="19" r="3" fill="#fff" stroke="#222" />
    </>
  ),
  note: (
    <>
      <rect x="3" y="3" width="17" height="18" fill="#fff" stroke="#222" strokeWidth="1.3" />
      <path d="M7 9 H15 M7 13 H12" stroke="#222" />
    </>
  ),
  brush: (
    <>
      <path d="M8 12 L18 2 L20 4 L12 15 Z" fill="#c8a24c" stroke="#6a4c10" />
      <path d="M3 15 L10 10 L14 14 L8 18 Z" fill="#e2cf96" stroke="#8a7a38" />
      <path d="M2 21 H22 M2 18 V24 M22 18 V24" stroke="#c22" strokeWidth="1.2" />
    </>
  ),
  bino: (
    <>
      <ellipse cx="8" cy="5" rx="4" ry="3" fill="#445" /><ellipse cx="17" cy="5" rx="4" ry="3" fill="#445" />
      <path d="M4 6 L3 12 H11 L10 6 Z M14 6 L13 12 H21 L20 6 Z" fill="#667" />
      <Txt y={22} s={9} f="#333" w={700}>10H7</Txt>
    </>
  ),
  cubes: (
    <>
      <Cube x={6} y={0} k={.72} /><Cube x={0} y={10} k={.72} /><Cube x={12} y={10} k={.72} />
    </>
  ),
  dimbox: (
    <>
      <path d="M8 9 H16 V3 M8 9 V17 H16 V9" fill="none" stroke="#222" />
      <path d="M9 1 H15 M1 15 H7 M12 22 H18 M21 6 V18" stroke={red} strokeWidth="1.2" />
      <path d="M12 20 V24 M1 12 V18 M7 12 V18" stroke={red} />
    </>
  ),
  xo: <path d="M6 6 L18 18 M18 6 L6 18" stroke="#222" strokeWidth="1.3" />,
  tolA: <Tol a="±.05" />,
  tolB: <Tol a="+.08" b="-.08" />,
  tolC: <Tol a="+.08" b="-.08" f="#666" />,
  tolD: <Tol a="+.09" b="-.09" />,
  xbox: (
    <>
      <rect x="2" y="3" width="20" height="18" fill="none" stroke="#a33" strokeWidth="1.4" />
      <path d="M7 7 L17 17 M17 7 L7 17" stroke="#222" strokeWidth="1.2" />
    </>
  ),
  xparen: (
    <>
      <path d="M4 3 C0 9 0 15 4 21 M20 3 C24 9 24 15 20 21" fill="none" stroke="#a33" strokeWidth="1.3" />
      <path d="M7 7 L17 17 M17 7 L7 17" stroke="#222" strokeWidth="1.2" />
    </>
  ),
  h7: <Txt y={16} s={10} f="#3a3fc0">10H7</Txt>,
  h7a: <Fit a="10H7" b="[8.01]" />,
  h7b: <Fit a="10H7" b="[8.015]" />,
  h7c: <Fit a="10" b="[8.015]" />,
  dimR: (
    <>
      <path d="M2 20 L10 12 H22" fill="none" stroke={red} />
      <path d="M2 20 L7 17 L5 15 Z" fill={red} />
      <Txt x={16} y={10} s={8} f="#555">R|0|</Txt>
    </>
  ),
  dimT: (
    <>
      <path d="M2 22 L22 3" stroke={red} />
      <path d="M2 22 L8 19 L6 16 Z" fill={red} />
      <Txt x={10} y={12} s={7} f="#a33">R|0</Txt>
    </>
  ),
  diam: (
    <>
      <circle cx="12" cy="13" r="8" fill="none" stroke="#333" strokeWidth="1.2" />
      <path d="M3 22 L21 3" stroke={red} strokeWidth="1.2" />
      <path d="M9 13 H15" stroke="#333" />
    </>
  ),
  diam2: (
    <>
      <circle cx="12" cy="13" r="8" fill="none" stroke="#333" strokeWidth="1.2" />
      <path d="M3 22 L21 3" stroke={red} strokeWidth="1.2" />
    </>
  ),
  ret: <path d="M20 6 V12 C20 15 17 16 12 16 H9 M13 11 L7 16 L13 21" fill="none" stroke="#4aa3b0" strokeWidth="3" />,
  constraint: (
    <>
      <path d="M12 1 V23" stroke="#333" strokeDasharray="2 1" />
      <path d="M7 1 L12 4 L7 7 Z M17 1 L12 4 L17 7 Z" fill="#2a3fc0" />
      <rect x="2" y="13" width="9" height="9" fill="#f8ea72" stroke="#333" />
      <path d="M13 13 L22 22 H13 Z" fill="#b01818" />
    </>
  ),
  movecomp: (
    <>
      <path d="M12 2 L23 8 V18 L12 23 L1 18 V8 Z" fill="#f6df8a" stroke="#a78120" />
      <path d="M12 10 L23 8 M12 10 L1 8 M12 10 V23" stroke="#a78120" />
      <path d="M14 9 V21 M8 15 H20" stroke="#555" strokeWidth="1.6" />
      <path d="M14 8 L12 11 H16 Z M14 22 L12 19 H16 Z M7 15 L10 13 V17 Z M21 15 L18 13 V17 Z" fill="#fff" stroke="#222" strokeWidth=".5" />
    </>
  ),
  arrcomp: (
    <>
      <path d="M2 14 L7 12 L11 14 V20 L7 22 L2 20 Z" fill="#eec766" stroke="#a78120" strokeWidth=".6" />
      <path d="M9 14 L14 12 L18 14 V20 L14 22 L9 20 Z" fill="#eec766" stroke="#a78120" strokeWidth=".6" />
      <path d="M19 3 V10 M15.5 6.5 H22.5" stroke="#2d72d8" strokeWidth="1.6" />
    </>
  ),
  menu: (
    <>
      <path d="M1 4 H20 M4 8 H16 M4 12 H12 M4 16 H14" stroke="#4a6f9a" strokeWidth="1.4" />
      <path d="M13 9 L22 17 L18 17.5 L19.5 22 L17 22.5 L15.5 18.5 L13 21 Z" fill="#bbb" stroke="#555" strokeWidth=".6" />
    </>
  ),
  gfa: (
    <g fill="none" stroke="#c8c8c8" strokeWidth="1.5">
      <rect x="3" y="7" width="12" height="14" />
      <path d="M3 12 H15 M9 7 V21" />
      <ellipse cx="17" cy="9" rx="4" ry="6" />
    </g>
  ),
  gfb: (
    <>
      <path d="M3 8 C5 3 10 3 12 8 L8 9" fill="none" stroke="#c8c8c8" strokeWidth="2" />
      <path d="M12 12 H23 L19 18 V23 L16 21 V18 Z" fill="#dcdcdc" stroke="#c0c0c0" />
    </>
  ),
  fbox: (
    <>
      <path d="M5 4 V12 M1 8 H9" stroke="#444" strokeWidth="1.2" />
      <circle cx="5" cy="8" r="2" fill="none" stroke="#c22" />
      <path d="M9 12 H22 L17 17 V22 H14 V17 Z" fill="#e8b332" stroke="#a87c14" strokeWidth=".7" />
    </>
  ),
  gar: (
    <>
      <path d="M4 12 C3 4 13 2 15 8 M12 9 L16 9 L16 5" fill="none" stroke="#c8c8c8" strokeWidth="1.6" />
      <path d="M15 12 V24 M9 18 H21" stroke="#c8c8c8" strokeWidth="1.2" />
      <circle cx="15" cy="18" r="3" fill="none" stroke="#c8c8c8" />
    </>
  ),
  gch: (
    <g fill="#d4d4d4" stroke="#bdbdbd" strokeWidth=".8">
      <rect x="2" y="3" width="6" height="5" /><rect x="9" y="5" width="6" height="5" />
      <rect x="14" y="10" width="7" height="12" fill="#eee" />
      <path d="M17 10 V22" />
    </g>
  ),
  cubetg: (
    <>
      <path d="M3 7 L12 2 L20 7 V17 L12 22 L3 17 Z M3 7 L12 11 L20 7 M12 11 V22" fill="none" stroke="#444" strokeWidth="1" strokeDasharray="1.5 1" />
      <circle cx="18" cy="18" r="4.4" fill="none" stroke="#c22" strokeWidth="1.4" />
      <path d="M18 11 V24 M11 18 H24" stroke="#c22" />
    </>
  ),
  dashrect: (
    <>
      <rect x="4" y="4" width="17" height="17" fill="none" stroke="#444" strokeDasharray="2 2" />
      <Dot x={4} y={4} r={1.6} /><Dot x={21} y={21} r={1.6} />
    </>
  ),
  ecube: (
    <>
      <path d="M2 14 L9 5 L20 3 L23 12 L14 20 L4 20 Z" fill="#d8d8d8" stroke="#555" />
      <path d="M8 9 L18 6 L20 10 L10 13 Z" fill="#efefef" stroke="#b44" strokeWidth=".7" />
      <path d="M2 14 L14 13 L14 20" fill="none" stroke="#777" />
    </>
  ),
  bcube: (
    <>
      <path d="M12 2 L22 6 L12 11 L2 6 Z" fill="#e2c9e4" />
      <path d="M2 6 L12 11 V23 L2 18 Z" fill="#9fd0f4" />
      <path d="M22 6 L12 11 V23 L22 18 Z" fill="#4a7ee0" />
    </>
  ),
  snapm: (
    <>
      <path d="M12 4 L20 12 L12 20 L4 12 Z" fill="#f6e05a" stroke="#222" />
      <circle cx="12" cy="5" r="2" fill="#222" /><circle cx="20" cy="12" r="2" fill="#222" />
      <circle cx="12" cy="20" r="2" fill="#222" /><circle cx="4" cy="12" r="2" fill="#222" />
      <path d="M1 2 L6 6 L1 10 Z" fill="#22b14c" /><path d="M1 16 L6 19 L1 23 Z" fill="#c22" />
    </>
  ),
  snape: (
    <>
      <path d="M5 20 L18 6" stroke="#222" strokeWidth="1.4" />
      <Dot x={18} y={6} r={2.4} />
    </>
  ),
  snapc: (
    <>
      <path d="M5 20 L20 5" stroke="#222" strokeWidth="1.4" />
      <Dot x={12} y={12} r={2.4} />
    </>
  ),
  snapcv: <path d="M3 3 C11 3 9 12 12 16 C14 20 18 21 21 21" fill="none" stroke="#333" strokeWidth="1.3" />,
  snapp: (
    <>
      <path d="M3 20 L9 5 L15 18 L21 9" fill="none" stroke="#8a2fb0" strokeWidth="1.4" />
      <Dot x={9} y={5} /><Dot x={15} y={18} /><Dot x={3} y={20} /><Dot x={21} y={9} />
    </>
  ),
  snapw: (
    <>
      <path d="M3 17 C7 6 11 8 13 12 C15 16 18 13 21 9" fill="none" stroke="#333" strokeWidth="1.4" />
      <Dot x={6} y={12} /><Dot x={12} y={11} /><Dot x={20} y={10} />
    </>
  ),
  snapi: (
    <>
      <path d="M3 17 C7 9 17 9 21 17 M12 2 V22" fill="none" stroke="#333" strokeWidth="1.2" />
      <Dot x={12} y={11} />
    </>
  ),
  snapo: (
    <>
      <circle cx="12" cy="12" r="9.5" fill="none" stroke="#222" strokeWidth="1.3" />
      <Dot x={12} y={12} />
    </>
  ),
  snapq: (
    <>
      <circle cx="12" cy="12" r="9.5" fill="none" stroke="#555" strokeWidth="1.3" />
      <Dot x={12} y={2.5} /><Dot x={21.5} y={12} /><Dot x={12} y={21.5} /><Dot x={2.5} y={12} />
    </>
  ),
  snapx: (
    <>
      <path d="M12 3 V21 M3 12 H21" stroke="#222" strokeWidth="1.3" />
      <Dot x={12} y={12} />
    </>
  ),
  snapl: (
    <>
      <path d="M3 21 L21 4" stroke="#222" strokeWidth="1.3" />
      <Dot x={7} y={17} />
    </>
  ),
  snapf: (
    <>
      <path d="M3 8 C9 2 17 2 21 6 L20 18 C15 14 9 15 5 21 Z" fill="#cfe4f4" stroke="#4f7fbc" />
      <Dot x={10} y={9} />
    </>
  ),
  snapg: (
    <>
      <path d="M2 12 L12 4 L23 12 L12 21 Z" fill="#6f75c8" stroke="#444" />
      <path d="M7 8 L17 17 M12 4 L17 8" stroke="#c9c9f0" />
      <Dot x={11} y={11} r={1.8} />
    </>
  ),
  gridc: (
    <>
      <path d="M4 4 L19 8 V22 L4 18 Z" fill="#fff" stroke="#333" strokeWidth="1.2" />
      <path d="M9 5 V19 M14 6.5 V20.5 M4 9 L19 13 M4 14 L19 18" stroke="#333" />
      <Dot x={14} y={13} r={1.5} />
    </>
  ),
  zoomw: (
    <>
      <rect x="3" y="3" width="18" height="18" fill="#eef2fb" stroke="#3f5aa8" strokeDasharray="2.5 1.2" />
      <rect x="3" y="3" width="18" height="3" fill="#2a3fa8" />
      <circle cx="12" cy="12" r="4" fill="none" stroke="#555" strokeWidth="1.3" />
      <path d="M15 15 L19 19" stroke="#555" strokeWidth="1.6" />
      <Dot x={3} y={21} r={1.6} /><Dot x={21} y={4} r={1.6} />
    </>
  ),
  panw: (
    <>
      <rect x="2" y="3" width="18" height="15" fill="#f3f4f8" stroke="#8a8fa5" />
      <path d="M9 12 L12 9 L18 15 L20 13 L23 20 L15 23 Z" fill="#ecc9a4" stroke="#a8825c" strokeWidth=".8" />
    </>
  ),
  rot: (
    <g fill="none" stroke="#3a57a8" strokeWidth="2.2">
      <path d="M4 12 C4 6 11 3 17 6" />
      <path d="M20 12 C20 18 13 21 7 18" stroke="#888" />
      <path d="M15 2 L19 7 L13 9" strokeWidth="1.6" />
    </g>
  ),
  wand: (
    <>
      <path d="M2 15 L15 9 L18 15 L7 21 Z" fill="#5e76d8" stroke="#3a4a9c" strokeWidth=".6" />
      <path d="M19 3 L21 5" stroke="#c22" strokeWidth="2" />
    </>
  ),
  gpages: (
    <g fill="#f2f2f2" stroke="#c4c4c4" strokeWidth="1.2">
      <rect x="2" y="1" width="13" height="15" />
      <path d="M9 14 L21 12 V20 L11 23 Z" />
      <path d="M5 5 H11 M5 9 H11" strokeDasharray="2 1" />
    </g>
  ),
  layw: (
    <>
      <rect x="2" y="2" width="20" height="20" fill="#dde6fb" stroke="#6a6fb0" />
      <rect x="2" y="2" width="20" height="4" fill="#3340b8" />
      <path d="M6 9 H10 V12 H6 Z M14 9 H18 V12 H14 Z M6 15 H10 V18 H6 Z M14 15 H18 V18 H14 Z" fill="#e04a2c" />
    </>
  ),
  vprint: (
    <>
      <path d="M3 14 L13 3 H18 L12 14 Z" fill="#777" stroke="#333" strokeWidth=".7" />
      <path d="M1 16 L12 14 L23 17 V21 L12 22 L1 20 Z" fill="#aaa" stroke="#444" strokeWidth=".7" />
    </>
  ),
  vcube: (
    <>
      <path d="M12 2 L22 6 L12 11 L2 6 Z" fill="#b8c2ef" stroke="#6a75b0" strokeWidth=".5" />
      <path d="M2 6 L12 11 V23 L2 18 Z" fill="#8a99e2" stroke="#6a75b0" strokeWidth=".5" />
      <path d="M22 6 L12 11 V23 L22 18 Z" fill="#6a7ad0" stroke="#6a75b0" strokeWidth=".5" />
    </>
  ),
  grv: (
    <>
      <path d="M3 3 L11 9 L3 15 Z" fill="#22a14c" /><path d="M3 14 L9 19 L3 24 Z" fill="#c22" />
      <path d="M11 6 L20 4 L23 12 L13 20 Z" fill="#b4bde4" stroke="#6070b0" />
      <path d="M14 10 L20 8 V14 L15 15 Z" fill="#6070c0" />
    </>
  ),
  prt: (
    <>
      <path d="M3 4 L9 1 L13 3 V14 L19 11 L22 13 V18 L11 23 L3 18 Z" fill="#2f62e6" stroke="#0d2e9e" strokeWidth=".7" />
      <path d="M5 6 L10 3 V14 L5 16 Z" fill="#a8c4fb" />
    </>
  ),
  tView: (
    <>
      <path d="M12 2 L22 7 V17 L12 22 L2 17 V7 Z" fill="#e8f8ec" stroke="#1fa34c" strokeWidth="1.2" />
      <path d="M2 7 L12 12 L22 7 M12 12 V22 M7 4 V19 M17 4 V19 M2 12 L12 17 L22 12" fill="none" stroke="#1fa34c" />
      <path d="M14 23 L22 21" stroke="#e04a2c" strokeWidth="1.4" />
    </>
  ),
  tCam: (
    <>
      <path d="M2 6 L17 1 L21 18 L5 23 Z" fill="#fff" stroke="#e02a1c" strokeWidth="1.4" />
      <circle cx="12" cy="11" r="4" fill="#8fb0ec" stroke="#2a3fa8" />
      <circle cx="12" cy="11" r="1.6" fill="#222" />
      <rect x="18" y="9" width="5" height="5" fill="#222" />
    </>
  ),
  tFolder: (
    <>
      <path d="M2 9 H7 L9 6 H18 V10 H23 L20 22 H2 Z" fill="#f6dc8d" stroke="#a17c1e" />
      <path d="M2 22 L6 11 H23 L20 22 Z" fill="#fbe99e" stroke="#a17c1e" />
    </>
  ),
  tFolderEq: (
    <>
      <path d="M14 1 H22 M14 4 H22" stroke="#1f2fa8" />
      <path d="M2 9 H7 L9 6 H18 V10 H23 L20 22 H2 Z" fill="#f6dc8d" stroke="#a17c1e" />
      <path d="M2 22 L6 11 H23 L20 22 Z" fill="#fbe99e" stroke="#a17c1e" />
    </>
  ),
  tSketch: (
    <>
      <rect x="2" y="2" width="8" height="8" fill="#fff" stroke="#222" strokeWidth="1.4" />
      <rect x="2" y="14" width="8" height="8" fill="#fff" stroke="#222" strokeWidth="1.4" />
      <path d="M13 14 H21 V22 H13 Z" fill="#fff" stroke="#222" strokeWidth="1.4" />
      <path d="M15 11 L20 4 L22 5 L17 12 Z" fill="#e8b332" />
      <path d="M20 4 L22 5" stroke="#c22" strokeWidth="1.5" />
    </>
  ),
  tExt: (
    <>
      <path d="M3 4 L12 2 L21 4 V20 L12 22 L3 20 Z" fill="#f0b45c" stroke="#c67a1e" strokeWidth=".8" />
      <path d="M3 4 L12 6 L21 4 L12 2 Z" fill="#fbd89a" />
      <path d="M3 20 L12 22 L21 20 L12 18 Z" fill="#3b5cd0" />
      <path d="M7 5 V20 M12 6 V21 M17 5 V20" stroke="#d8541e" strokeWidth="1.2" />
    </>
  ),
  tUnite: (
    <>
      <path d="M1 3 H7 M4 0 V6" stroke="#e01818" strokeWidth="1.6" />
      <rect x="3" y="10" width="12" height="13" fill="#1f9286" stroke="#222" />
      <circle cx="15" cy="10" r="7" fill="#1f9286" stroke="#222" />
    </>
  ),
  tHole: (
    <>
      <path d="M7 2 V17 L12 21 L17 17 V2" fill="none" stroke="#222" strokeWidth="1.5" />
      <path d="M7 17 H17" stroke="#222" />
    </>
  ),
  box: (
    <>
      <rect x="2" y="3" width="19" height="19" fill="#fff" stroke="#111" strokeWidth="1.8" />
      <Chk x={2} y={1} k={1} />
    </>
  ),
  boxinfo: (
    <>
      <rect x="6" y="7" width="18" height="17" fill="#fff" stroke="#111" strokeWidth="1.8" />
      <Chk x={5} y={5} k={.9} />
      <circle cx="6" cy="6" r="6" fill="#e6e8f6" stroke="#7f86b8" />
      <Txt x={6} y={9.5} s={9} f="#222" w={700}>i</Txt>
    </>
  ),
  chk: <Chk />,
  rGear: (
    <>
      <circle cx="12" cy="12" r="7" fill="none" stroke="#333" strokeWidth="2.6" />
      <path d="M12 1 V5 M12 19 V23 M1 12 H5 M19 12 H23 M4 4 L7 7 M17 17 L20 20 M4 20 L7 17 M17 7 L20 4" stroke="#333" strokeWidth="2.6" />
    </>
  ),
  rTree: (
    <>
      <Cube x={0} y={0} k={.68} /><Cube x={11} y={12} k={.55} />
      <path d="M4 13 V24 M4 18 H11 M13 8 H24" stroke="#1e2fa8" strokeWidth="1.2" />
    </>
  ),
  rCons: (
    <>
      <path d="M2 1 L11 6 L2 11 Z M22 1 L13 6 L22 11 Z" fill="#1a23c8" />
      <path d="M12 0 V24" stroke="#333" strokeDasharray="2 1" />
      <rect x="1" y="13" width="9" height="10" fill="#f8ea72" stroke="#333" />
      <path d="M14 13 L23 23 H14 Z" fill="#c01010" />
    </>
  ),
  rAssy: (
    <>
      <ellipse cx="7" cy="3" rx="5" ry="2.5" fill="#d9a4cc" stroke="#7a3f70" />
      <path d="M2 3 V10 C2 13 12 13 12 10 V3" fill="#d9a4cc" stroke="#7a3f70" />
      <circle cx="18" cy="18" r="5" fill="none" stroke="#8a3f80" strokeWidth="1.3" />
      <circle cx="18" cy="18" r="2" fill="#8a3f80" />
      <path d="M4 14 V24 M4 18 H12 M14 7 H24" stroke="#1e2fa8" strokeWidth="1.2" />
    </>
  ),
  rBook: (
    <>
      <path d="M1 8 L4 3 H9 V22 H1 Z" fill="#ef8a1a" stroke="#9a5208" strokeWidth=".6" />
      <path d="M9 6 L12 2 H16 V22 H9 Z" fill="#27b043" stroke="#146d28" strokeWidth=".6" />
      <path d="M16 4 L19 1 H23 V20 L16 22 Z" fill="#3a8ad8" stroke="#1c5a9c" strokeWidth=".6" />
      <path d="M2 12 H8 M2 15 H8 M10 12 H15 M10 15 H15 M17 11 H22 M17 14 H22" stroke="#fff" strokeOpacity=".6" strokeWidth=".8" />
    </>
  ),
  rInfo: (
    <>
      <path d="M9 4 C15 4 20 9 20 15 M9 0 C18 0 24 7 24 15" fill="none" stroke="#3a70c8" strokeWidth="2.2" />
      <circle cx="9" cy="15" r="8.5" fill="#1f76d8" stroke="#0d4a9c" />
      <rect x="7.5" y="13" width="3" height="7" fill="#fff" />
      <circle cx="9" cy="10.5" r="1.8" fill="#fff" />
    </>
  ),
  rDoc: (
    <>
      <path d="M3 1 H15 L21 7 V23 H3 Z" fill="#f2f7fd" stroke="#3f7ec8" />
      <circle cx="12" cy="14" r="6" fill="#2ea35a" />
      <path d="M7 12 C10 9 14 9 17 11 L12 16 Z" fill="#3f8ad8" />
    </>
  ),
  rClock: (
    <>
      <circle cx="12" cy="12" r="11" fill="#cfdcf4" stroke="#5c6270" strokeWidth="1.4" />
      <circle cx="12" cy="12" r="8.6" fill="#eef3fc" />
      <path d="M12 5 V13 H18" fill="none" stroke="#111" strokeWidth="1.6" />
    </>
  ),
  rRain: (
    <>
      <rect x="1" y="1" width="10" height="23" fill="url(#rainbow)" />
      <path d="M13 8 L22 22" stroke="#222" strokeWidth="2.6" />
      <circle cx="12" cy="5" r="3.4" fill="#fff" />
    </>
  ),
  rBlue: (
    <>
      <path d="M2 4 H10 V20 H2 Z" fill="#3f7fd8" />
      <path d="M10 5 H23 L12 11 L20 20" fill="none" stroke="#3f7fd8" strokeWidth="1.6" />
      <path d="M12 8 L20 22" stroke="#111" strokeWidth="2.6" />
      <circle cx="12" cy="3" r="3" fill="#fff" />
      <path d="M1 22 H12" stroke="#d8a41c" strokeWidth="1.6" />
    </>
  ),
  rTool: (
    <>
      <path d="M6 6 C10 1 18 1 22 4 L20 7 C16 5 12 5 9 8 Z" fill="#888" stroke="#333" strokeWidth=".6" />
      <path d="M14 6 L8 20" stroke="#666" strokeWidth="2.4" />
      <circle cx="7" cy="17" r="4" fill="#aaa" stroke="#444" />
      <path d="M1 21 H9 V24 H1 Z" fill="#f08a1c" />
      <path d="M13 18 H20 V21 H13 Z" fill="#999" />
    </>
  ),
}

const Ico = ({ n, s = 18 }) => (
  <Svg viewBox="0 0 24 24" $s={s}>{ICONS[n]}</Svg>
)

/* items laid on a row: each item names its horizontal centre on the page, margins follow from it */
const Run = ({ items, from, s = 18 }) => {
  let x = from
  return items.map((it, i) => {
    const [n, cx, flag] = it
    let el
    if (n === '|') {
      el = <Bar key={i} $ml={cx - x} />
      x = cx + 1
    } else if (n === 'v') {
      el = <Down key={i} $ml={cx - 3.5 - x} />
      x = cx + 3.5
    } else {
      const w = flag === 'on' || flag === 'box' ? s + 5 : s + 2
      el = (
        <Slot key={i} $w={w} $ml={cx - w / 2 - x} $on={flag === 'on'} $box={flag === 'box'}>
          <Ico n={n} s={s} />
        </Slot>
      )
      x = cx + w / 2
    }
    return el
  })
}

const quick = [
  ['save', 54], ['|', 69], ['undo', 84], ['v', 102], ['redo', 119], ['|', 133],
  ['cut', 148], ['copy', 171], ['paste', 194], ['target', 218], ['|', 231],
  ['saveas', 245], ['v', 264], ['|', 272], ['eraser', 287], ['|', 301], ['switchwin', 316],
]

const tabs = ['装配', '曲线', '分析', '视图', '渲染', '工具', '应用模块', '内部']

const filterBar = [
  ['gfa', 393], ['gfb', 419], ['fbox', 441, 'box'], ['v', 457], ['gar', 477], ['gch', 501], ['cubetg', 527],
  ['dashrect', 551], ['v', 570], ['ecube', 589], ['bcube', 613], ['snapm', 640, 'on'], ['snape', 664, 'on'],
  ['snapc', 689, 'on'], ['snapcv', 713], ['snapp', 739, 'on'], ['snapw', 764, 'on'], ['snapi', 789],
  ['snapo', 814, 'on'], ['snapq', 839], ['snapx', 864, 'on'], ['snapl', 889, 'on'], ['snapf', 914],
  ['snapg', 940], ['gridc', 963], ['|', 982], ['zoomw', 1003], ['panw', 1027], ['rot', 1052], ['wand', 1077],
  ['gpages', 1102], ['layw', 1128], ['v', 1146], ['vprint', 1165], ['v', 1182], ['vcube', 1202], ['v', 1220],
  ['grv', 1237], ['v', 1257], ['|', 1270],
]

const iconGroups = [
  { w: 105, from: 714, label: '标准化工具 - G...', pl: 2, rows: [
    [['stdA', 729], ['stack', 753], ['stacklist', 776], ['|', 791], ['tag', 805]],
    [['bluecheck', 729], ['wingcheck', 753], ['cubecheck', 776], ['|', 791], ['boxpurple', 805]],
  ] },
  { w: 51, from: 819, label: '齿轮...', pl: 1, rows: [[['pen1', 833], ['pen2', 857]], [['hand', 835]]] },
  { w: 59, from: 870, label: '弹簧...', pl: 5, rows: [[['coil', 886], ['spring', 910]], [['washer', 886], ['|', 900], ['shears', 914]]] },
  { w: 52, from: 929, label: '加工...', pl: 1, rows: [[['pcheck', 943], ['pdoc', 967]], [['gridp', 945], ['csys', 967]]] },
  { w: 98, from: 981, label: '建模工具 - G...', pl: 4, rows: [
    [['tri', 996], ['tbl', 1019], ['foldplus', 1042], ['foldnet', 1064]],
    [['note', 996], ['brush', 1019], ['|', 1033], ['bino', 1048]],
  ] },
  { w: 29, from: 1079, label: '?..', pl: 1, rows: [[['cubes', 1094]], [['cubes', 1094]]] },
  { w: 287, from: 1108, label: '尺寸快速格式化工具 - GC工具箱', pl: 57, rows: [
    [['dimbox', 1123], ['|', 1138], ['xo', 1152], ['tolA', 1175], ['tolB', 1198], ['tolC', 1221], ['tolD', 1244],
      ['xbox', 1267], ['xparen', 1290], ['h7', 1313], ['h7a', 1336], ['h7b', 1359], ['h7c', 1382]],
    [['dimR', 1123], ['dimT', 1146], ['|', 1161], ['diam', 1175], ['diam2', 1198], ['ret', 1221]],
  ] },
]

const More = ({ n }) => (
  <BigTool $w={38}>
    <MoreIcon><Ico n={n} s={22} /></MoreIcon>
    更多
    <ToolCaret />
  </BigTool>
)
const Big = ({ n, label, w, ml, off, caret }) => (
  <BigTool $w={w} $ml={ml} $off={off}>
    <BigIcon><Ico n={n} s={32} /></BigIcon>
    {label}
    {caret && <ToolCaret />}
  </BigTool>
)
const Small = ({ n, children }) => (
  <SmallRow><Ico n={n} s={16} />{children}</SmallRow>
)

const tree = [
  { pl: 5, exp: '+', icon: 'tView', text: '模型视图', guide: 9 },
  { pl: 5, exp: '+', check: true, icon: 'tCam', text: '摄像机', guide: 9 },
  { pl: 5, exp: '+', icon: 'tFolderEq', text: '用户表达式', guide: 9 },
  { pl: 5, exp: '−', icon: 'tFolder', text: '模型历史记录', guide: 9, end: true },
  { box: 'box', icon: 'csys', text: '基准坐标系 (0)', ok: true },
  { box: 'box', icon: 'tSketch', text: '草图 (1) "SKETCH_0...', ok: true },
  { box: 'box', icon: 'tExt', text: '拉伸 (2)', ok: true },
  { box: 'box', icon: 'tSketch', text: '草图 (3) "SKETCH_0...', ok: true },
  { box: 'box', icon: 'tSketch', text: '草图 (4) "SKETCH_0...', ok: true },
  { box: 'box', icon: 'tExt', text: '拉伸 (5)', ok: true },
  { box: 'box', icon: 'tExt', text: '拉伸 (6)', ok: true },
  { box: 'boxinfo', icon: 'tExt', text: '拉伸 (7)', ok: true },
  { box: 'box', icon: 'tUnite', text: '合并 (8)', ok: true },
  { box: 'box', icon: 'tHole', text: '简单孔 (9)', ok: true, bold: true, end: true },
]

const railItems = [
  { n: 'rGear', mt: 5, h: 18, s: 15, small: true },
  { n: 'rTree', mt: 26 },
  { n: 'rCons', mt: 12 },
  { n: 'rAssy', mt: 5, h: 45, on: true },
  { n: 'rBook', mt: 4 },
  { n: 'rInfo', mt: 24 },
  { n: 'rDoc', mt: 25 },
  { n: 'rClock', mt: 23 },
  { n: 'rRain', mt: 12 },
  { n: 'rBlue', mt: 12 },
  { n: 'rTool', mt: 13 },
]

const FILLERS = Array.from({ length: 19 })

const TreeRow = ({ r, i }) => (
  <Row $odd={i % 2 === 1} $guide={r.guide || (r.box ? 28 : 0)} $end={r.end}>
    <NameCell $pl={r.box ? 28 : r.pl} $bold={r.bold}>
      {r.exp && <Expander>{r.exp}</Expander>}
      {r.box && <Tick />}
      {r.box && <Ico n={r.box} s={14} />}
      {r.check && <Gap $ml={2}><Ico n="chk" s={14} /></Gap>}
      <Gap $ml={r.check ? 2 : 1}><Ico n={r.icon} s={16} /></Gap>
      <Gap $ml={3}>{r.text}</Gap>
    </NameCell>
    <Cell $w="100px">{r.ok && <Ico n="chk" s={14} />}</Cell>
    <Cell $w="100px" />
    <Cell />
  </Row>
)

const Model = () => {
  const yellow = '#ffc800'
  const dark = '#a36400'
  const side = '#c47500'
  const edge = { stroke: '#3a2c10', strokeWidth: 2, strokeLinejoin: 'round' }
  const blue = { stroke: '#4a68ff', strokeWidth: 5, fill: 'none' }
  return (
    <Canvas viewBox="515 205 1088 758">
      <defs>
        <linearGradient id="holeG" gradientUnits="userSpaceOnUse" x1="285" y1="850" x2="450" y2="1190">
          <stop offset="0" stopColor="#5a3a00" />
          <stop offset=".28" stopColor="#e08a00" />
          <stop offset=".42" stopColor="#ff9d00" />
          <stop offset=".66" stopColor="#ffcd10" />
          <stop offset="1" stopColor="#ffc400" />
        </linearGradient>
        <linearGradient id="bossG" gradientUnits="userSpaceOnUse" x1="300" y1="690" x2="740" y2="1090">
          <stop offset="0" stopColor="#f09000" />
          <stop offset=".16" stopColor="#ffc400" />
          <stop offset=".55" stopColor="#ffc800" />
          <stop offset=".72" stopColor="#f5a000" />
          <stop offset=".9" stopColor="#d88400" />
          <stop offset="1" stopColor="#a86800" />
        </linearGradient>
        <linearGradient id="innerG" gradientUnits="userSpaceOnUse" x1="1330" y1="830" x2="1240" y2="1200">
          <stop offset="0" stopColor="#a36400" />
          <stop offset=".32" stopColor="#f09200" />
          <stop offset=".55" stopColor="#ffd020" />
          <stop offset=".85" stopColor="#ffc000" />
          <stop offset="1" stopColor="#ffb400" />
        </linearGradient>
        <linearGradient id="slotG" gradientUnits="userSpaceOnUse" x1="1040" y1="1080" x2="1010" y2="1270">
          <stop offset="0" stopColor="#a36400" />
          <stop offset="1" stopColor="#5a3a00" />
        </linearGradient>
        <linearGradient id="farG" gradientUnits="userSpaceOnUse" x1="110" y1="710" x2="110" y2="860">
          <stop offset="0" stopColor="#a36400" />
          <stop offset="1" stopColor="#5a3a00" />
        </linearGradient>
        <linearGradient id="rearG" gradientUnits="userSpaceOnUse" x1="830" y1="500" x2="1030" y2="600">
          <stop offset="0" stopColor="#6a4400" />
          <stop offset=".6" stopColor="#f09200" />
          <stop offset="1" stopColor="#e88c00" />
        </linearGradient>
        <linearGradient id="rainbow" x1="0" y1="0" x2="0" y2="1">
          <stop offset="0" stopColor="#ff2a1a" />
          <stop offset=".3" stopColor="#ffe81a" />
          <stop offset=".55" stopColor="#1adc3a" />
          <stop offset=".78" stopColor="#1ac8f0" />
          <stop offset="1" stopColor="#1a2ae0" />
        </linearGradient>
      </defs>
      <g transform="translate(880 370) scale(.3444 .357)">
        {/* rear plate */}
        <path d="M1412 405 L1482 362 V432 L1440 440 Z" fill={side} {...edge} />
        <path d="M1450 1040 V1145 L1380 1175 Z" fill={side} />
        <path d="M468 88 L1338 450 L1462 498 L1445 900 L1320 1000 L960 1100 L455 800 Z" fill={dark} {...edge} />
        <path d="M468 88 L540 43 L662 95 L736 50 L1482 360 L1412 405 L1338 450 Z" fill={yellow} {...edge} />
        <path d="M1338 450 L1412 405 L1535 458 L1462 498 Z" fill={yellow} {...edge} />
        <path d="M808 522 C840 500 900 495 960 515 C1020 540 1070 590 1092 642 L1040 640 L900 580 Z" fill="url(#rearG)" {...edge} />
        <path d="M1008 552 C1050 585 1075 615 1092 644 L1040 625 C1025 600 1015 575 1008 552 Z" fill="#dfe1e4" />
        <path d="M912 505 C905 530 903 550 905 568" {...blue} strokeWidth="3" />

        {/* far end of the front plate */}
        <path d="M105 312 L226 362 L170 405 L170 870 L135 860 C100 810 85 770 87 700 Z" fill={dark} {...edge} />
        <path d="M87 702 L140 724 L135 860 C100 815 85 770 87 702 Z" fill="url(#farG)" {...edge} />
        <path d="M135 860 L122 1185 L175 1208 L175 830 Z" fill={dark} {...edge} />
        <path d="M122 1186 L155 1200" {...blue} />
        <path d="M1380 1172 L1450 1145" {...blue} />

        {/* right hand U block */}
        <path d="M1170 780 L1445 890 L1445 905 C1430 1050 1330 1190 1235 1195 C1190 1195 1155 1150 1160 1090 Z" fill="url(#innerG)" {...edge} />
        <path d="M1338 450 L1322 860 C1310 950 1260 1060 1165 1128" {...blue} />
        <path d="M900 715 L975 670 L958 1065 L960 1110 C965 1190 1010 1230 1040 1245 L1190 1300 L870 1497 Z" fill={side} {...edge} />
        <path d="M975 672 L1100 722 L1085 1112 L958 1065 Z" fill={dark} {...edge} />
        <path d="M958 1065 L1085 1112 C1085 1180 1105 1250 1150 1290 L1040 1245 C1010 1230 965 1190 960 1110 Z" fill="url(#slotG)" {...edge} />
        <path d="M1100 720 L1170 680 L1160 1090 C1155 1150 1190 1195 1235 1195 C1330 1190 1430 1050 1445 895 L1462 498 L1535 458 L1520 850 C1505 1050 1370 1300 1195 1302 C1120 1295 1085 1200 1085 1110 Z" fill={side} {...edge} />
        <path d="M975 670 L1412 405" {...blue} />
        <path d="M975 670 L958 1065 L960 1110 C965 1190 1010 1230 1040 1245" {...blue} />
        <path d="M870 1497 L1190 1300 M745 1445 L870 1497" {...blue} />

        {/* front plate */}
        <path d="M158 405 L900 715 L870 1497 L745 1445 L648 1503 L150 1300 Z" fill={dark} {...edge} />
        <path d="M105 312 L178 265 L1170 680 L1100 720 L975 670 L900 715 L158 405 L226 362 Z" fill={yellow} {...edge} />
        <path d="M270 765 C330 715 420 685 500 715 C620 760 720 880 757 1050 L668 1120 C640 980 520 800 270 765 Z" fill="url(#bossG)" />
        <path d="M270 765 C330 715 420 685 500 715 C620 760 720 880 757 1050" fill="none" {...edge} />
        <path d="M668 1115 L757 1050 L745 1445 L648 1503 Z" fill={side} {...edge} />
        <path d="M150 1300 L165 925 C170 820 230 760 330 757 C500 760 640 930 662 1110 L648 1503 Z" fill={dark} {...edge} />
        <path d="M228 965 C235 860 320 815 390 832 C470 850 560 960 595 1085 C610 1180 550 1245 470 1247 C390 1245 300 1170 255 1080 C235 1040 228 1000 228 965 Z" fill="url(#holeG)" {...edge} />

        {/* datum csys */}
        <g fill="none" stroke="#dcdcdc" strokeWidth="3">
          <path d="M638 940 L793 1005 L787 1165 L665 1240 L513 1175 L632 1100 Z" />
          <path d="M793 1005 L675 1075 L665 1240 M632 1100 L787 1165 M787 1165 L798 860 M632 1100 L500 1045 M665 1240 L565 1300" />
        </g>
        <path d="M798 850 L788 888 H808 Z" fill="#9a9a9a" />
        <path d="M484 1040 L522 1046 L514 1064 Z" fill="#f4f4f4" stroke="#aaa" />
        <path d="M553 1308 L582 1284 L590 1300 Z" fill="#f4f4f4" stroke="#aaa" />
        <g fill="#d8d8d8" fontFamily="Liberation Sans, sans-serif" fontSize="38">
          <text x="451" y="1048">X</text>
          <text x="787" y="843">Z</text>
          <text x="522" y="1333">Y</text>
        </g>
      </g>

      {/* view triad */}
      <g transform="translate(520 830) scale(.3333)">
        <path d="M68 130 L115 115 L168 140 L165 205 L115 230 L68 205 Z" fill="#c9cbcc" fillOpacity=".55" stroke="#b4b6b7" strokeWidth="2.5" />
        <path d="M68 130 L115 155 L168 140 M115 155 V230 M115 115 V195" fill="none" stroke="#bcbebf" strokeWidth="2" />
        <path d="M75 160 L165 203" stroke="#e8b8b2" strokeWidth="7" />
        <path d="M172 200 V120" stroke="#1a30c8" strokeWidth="8" />
        <path d="M172 100 L162 128 H182 Z" fill="#1a30c8" />
        <path d="M172 205 L120 235" stroke="#2ca02c" strokeWidth="8" />
        <path d="M95 250 L125 240 L115 222 Z" fill="#2ca02c" />
        <circle cx="172" cy="205" r="9" fill="#f4f4f4" stroke="#bbb" />
        <g fontFamily="Liberation Sans, sans-serif" fontSize="36">
          <text x="163" y="94" fill="#3a50e0">Z</text>
          <text x="48" y="168" fill="#d24a4a">X</text>
          <text x="72" y="272" fill="#4aa04a">Y</text>
        </g>
      </g>
    </Canvas>
  )
}

function Chevron() {
  return (
    <Svg viewBox="0 0 12 12" $s={11}>
      <path d="M1 2 L6 10 L11 2" fill="none" stroke="#0e6c8a" strokeWidth="2" />
    </Svg>
  )
}

export default function App() {
  return (
    <Shell>
      <GlobalStyle />
      <TitleBar>
        <Logo>NX</Logo>
        <Run items={quick} from={33} />
        <QuickText $ml={4}>切换窗口</QuickText>
        <Slot $w={18} $ml={5}><Ico n="win" s={17} /></Slot>
        <QuickText $ml={3}>窗口</QuickText>
        <Down $ml={3} />
        <Down $ml={5} />
        <WinTitle>NX 12.0.2.9 - 建模</WinTitle>
      </TitleBar>

      <TabBar>
        <FileTab>文件(F)</FileTab>
        <MenuTab $on>主页</MenuTab>
        {tabs.map(t => <MenuTab key={t}>{t}</MenuTab>)}
      </TabBar>

      <Ribbon>
        <Group $w={173}>
          <GroupBody $pl={3}>
            <Big n="sketch" label="草图" w={44} />
            <Gallery>
              <Ico n="scurve" s={24} /><Ico n="srect" s={24} /><Ico n="sline" s={24} />
              <Ico n="sarc" s={24} /><Ico n="scircle" s={24} /><Ico n="splus" s={24} />
            </Gallery>
            <Scroller>
              <ScrollUp /><Down /><ScrollMore><Down /></ScrollMore>
            </Scroller>
          </GroupBody>
          <GroupFoot $pl={54}>直接草图<FootCaret /></GroupFoot>
        </Group>

        <Group $w={370}>
          <GroupBody $pl={9}>
            <Big n="plane" label="基准平面" w={52} caret />
            <Big n="extrude" label="拉伸" w={40} caret />
            <Big n="hole" label="孔" w={40} />
            <SmallCol $w={67} $ml={7}>
              <Small n="pattern">阵列特征</Small>
              <Small n="unite">合并 <Down $ml={3} /></Small>
              <Small n="shell">抽壳</Small>
            </SmallCol>
            <Big n="blend" label="边倒圆" w={44} caret />
            <SmallCol $w={63} $ml={5}>
              <Small n="chamfer">倒斜角</Small>
              <Small n="trim">修剪体</Small>
              <Small n="draft">拔模</Small>
            </SmallCol>
            <More n="more1" />
          </GroupBody>
          <GroupFoot $pl={165}>特征<FootCaret /></GroupFoot>
        </Group>

        <Group $w={171}>
          <GroupBody $pl={4}>
            <Big n="movface" label="移动面" w={48} />
            <SmallCol $w={75} $ml={2}>
              <Small n="offset">偏置区域</Small>
              <Small n="replace">替换面</Small>
              <Small n="del">删除面</Small>
            </SmallCol>
            <More n="more2" />
          </GroupBody>
          <GroupFoot $pl={55}>同步建模<FootCaret /></GroupFoot>
        </Group>

        {iconGroups.map(g => (
          <Group key={g.label} $w={g.w}>
            <GroupBody>
              <IconRows>
                {g.rows.map((row, i) => (
                  <IconRow key={i}><Run items={row} from={g.from} /></IconRow>
                ))}
              </IconRows>
            </GroupBody>
            <GroupFoot $pl={g.pl}>{g.label}<FootCaret /></GroupFoot>
          </Group>
        ))}

        <Group $w={43}>
          <GroupBody><Big n="surface" label="曲面" w={43} caret /></GroupBody>
          <GroupFoot />
        </Group>

        <Group $w={165} $last>
          <GroupBody $pl={8}>
            <Big n="proc" label="处理装配" w={54} off />
            <Big n="add" label="添加" w={38} caret />
            <SmallCol $w={70} $ml={7}>
              <Small n="constraint">装配约束</Small>
              <Small n="movecomp">移动组件</Small>
              <Small n="arrcomp">阵列组件</Small>
            </SmallCol>
          </GroupBody>
          <GroupFoot $pl={71}>装配</GroupFoot>
        </Group>
      </Ribbon>

      <ToolBar>
        <ToolStart>
          <Slot $w={18} $ml={5}><Ico n="menu" s={17} /></Slot>
          <BarText $ml={3}>菜单(<u>M</u>)</BarText>
          <Down $ml={4} />
          <Bar $ml={6} />
          <Selects>
            <Select $w={132}>无选择过滤器<Down /></Select>
            <Select $w={138}>整个装配<Down /></Select>
          </Selects>
        </ToolStart>
        <Run items={filterBar} from={374} s={17} />
      </ToolBar>

      <Main>
        <Rail>
          {railItems.map(r => (
            <RailItem key={r.n} $mt={r.mt} $h={r.h} $on={r.on} $small={r.small}>
              <Ico n={r.n} s={r.s || 26} />
            </RailItem>
          ))}
        </Rail>

        <Nav>
          <NavHead>部件导航器<RestoreBox /></NavHead>
          <Table>
            <HeadRow>
              <HeadCell $w="200px">名称<SortUp /></HeadCell>
              <HeadCell $w="100px">最新</HeadCell>
              <HeadCell $w="100px">附注</HeadCell>
              <HeadCell />
            </HeadRow>
            {tree.map((r, i) => <TreeRow key={i} r={r} i={i} />)}
            {FILLERS.map((_, i) => (
              <Row key={i} $odd={(i + tree.length) % 2 === 1}>
                <NameCell $pl={0} />
                <Cell $w="100px" />
                <Cell $w="100px" />
                <Cell />
              </Row>
            ))}
          </Table>
          <Splitter />
          <Section>相关性<Chevron /></Section>
          <Section>细节<Chevron /></Section>
          <Section>预览<Chevron /></Section>
        </Nav>

        <Work>
          <DocTabs>
            <DocTab $w={77}><Ico n="prt" s={15} />75.prt</DocTab>
            <DocTab $w={82} $on><Ico n="prt" s={15} />76.prt<CloseX>✕</CloseX></DocTab>
          </DocTabs>
          <Viewport>
            <Model />
            <Watermark>UG<WatermarkCjk>爱好者论坛</WatermarkCjk>@yuzhl12400</Watermark>
          </Viewport>
        </Work>
      </Main>
    </Shell>
  )
}
